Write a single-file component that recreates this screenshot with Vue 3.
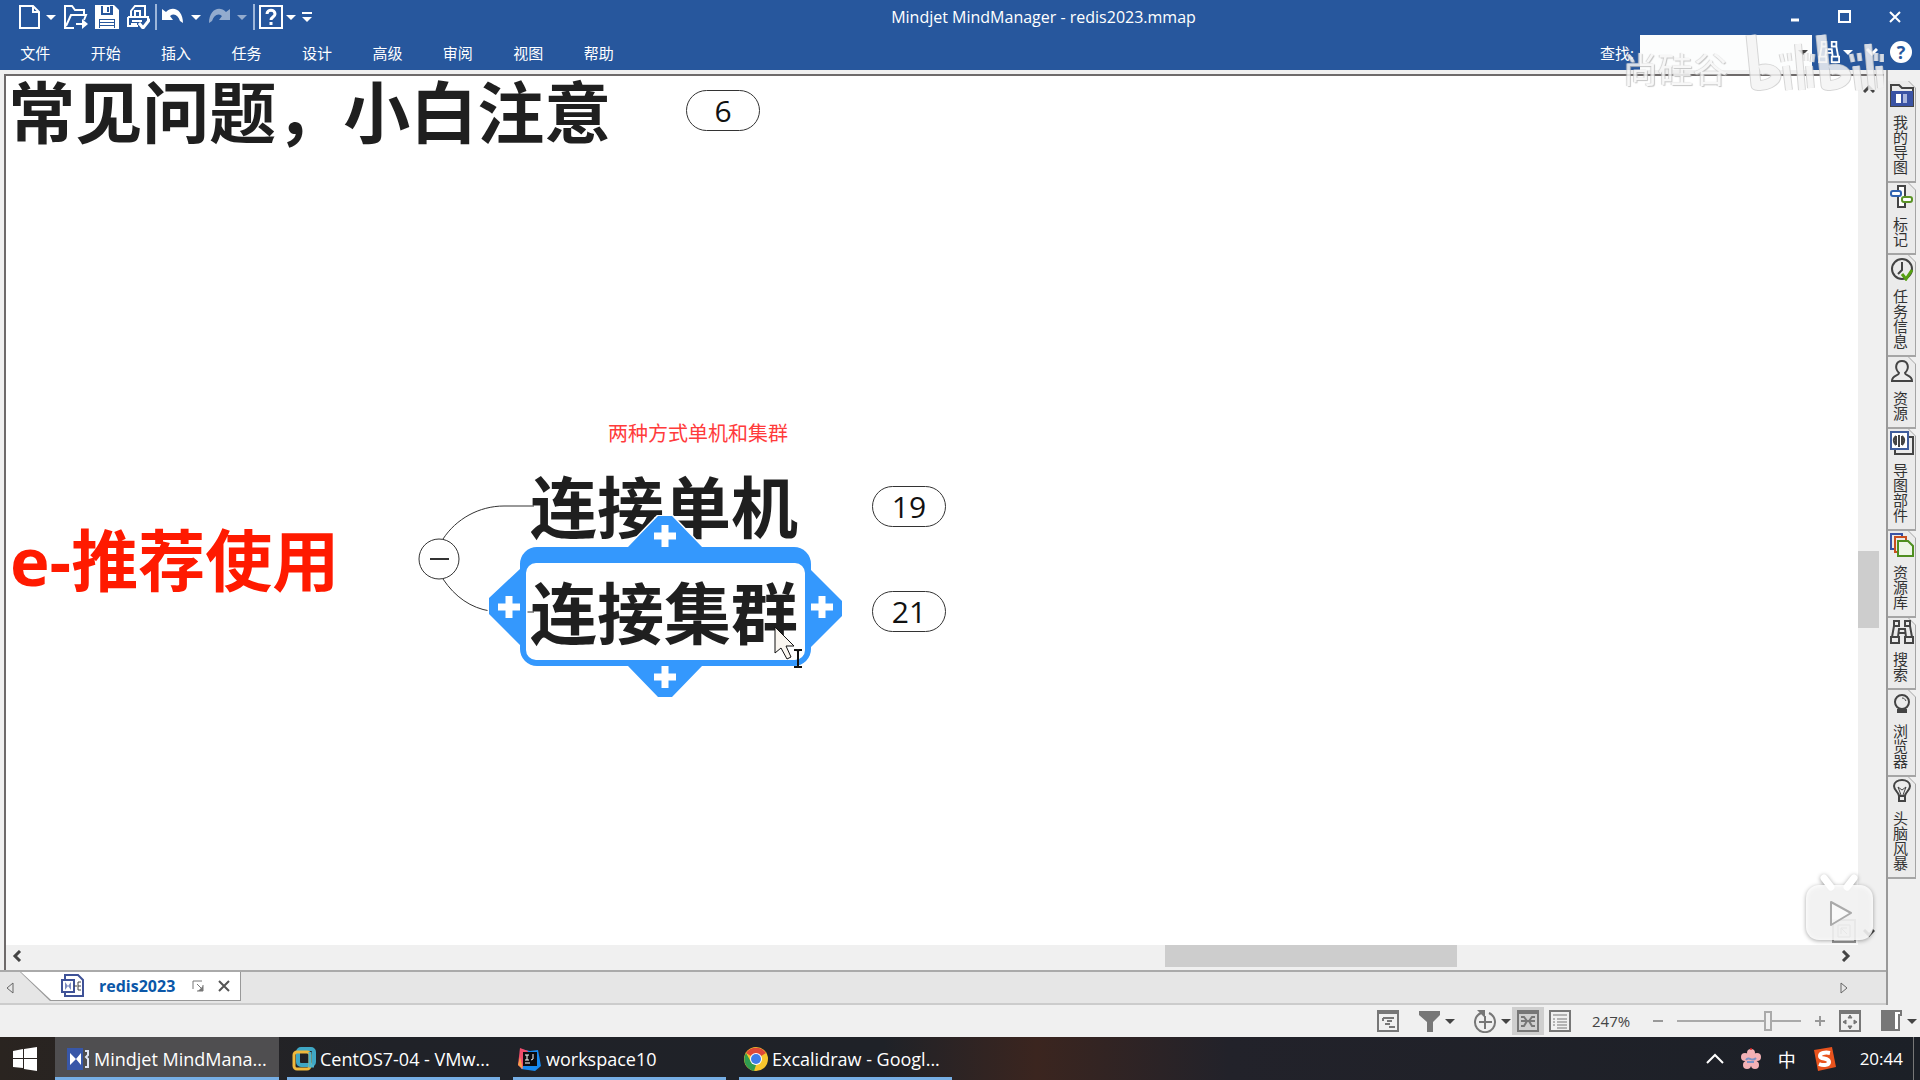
<template>
  <div class="window">
    <header class="header">
      <div class="title-row">
        <div class="quick">
          <button class="tool doc" aria-label="新建">
            <svg width="22" height="24" viewBox="0 0 22 24"><path d="M1 1h13l6 6v16H1zM14 1v6h6" fill="none" stroke="#fff" stroke-width="2" /></svg>
          </button>
          <button class="tool caret" aria-label="新建选项"><span class="arrow"></span></button>
          <button class="tool file" aria-label="打开">
            <svg width="24" height="24" viewBox="0 0 24 24" fill="none" stroke="#fff" stroke-width="2"><path d="M10 23H1V1h7l3 4h9v5M2 21l5-11h15l-2 5M12 19h8" /><path d="M18 14l6 5-6 5z" fill="#fff" stroke="none" /></svg>
          </button>
          <button class="tool file" aria-label="保存">
            <svg width="24" height="24" viewBox="0 0 24 24"><path d="M0 0h19l5 5v19H0z" fill="#fff" /><path d="M6 1h12v9H6zM4 14h16v9H4z" fill="#27579d" /><path d="M8 1h7v7H8z" fill="#fff" /><path d="M12 2h2v5h-2z" fill="#27579d" /><path d="M5 16h14M5 19h14M5 22h14" stroke="#fff" stroke-width="2" /></svg>
          </button>
          <button class="tool file" aria-label="打印">
            <svg width="24" height="24" viewBox="0 0 24 24" fill="none" stroke="#fff" stroke-width="2"><path d="M5 12V6l4-5h10v11M9 11V6h5v5M2 12h20v4M2 12v9h10M6 16h10M5 19h6" /><path d="M13 18l4 5 7-9" stroke-width="3" /></svg>
          </button>
          <span class="divider"></span>
          <button class="tool undo" aria-label="撤消">
            <svg width="22" height="20" viewBox="0 0 22 20"><path d="M0 2v11h11L8 9c4-3 8-1 10 5l3 2C21 3 11-2 4 5z" fill="#fff" /></svg>
          </button>
          <button class="tool caret" aria-label="撤消选项"><span class="arrow"></span></button>
          <button class="tool undo faded" aria-label="恢复">
            <svg width="22" height="20" viewBox="0 0 22 20"><path d="M22 2v11H11l3-4c-4-3-8-1-10 5l-3 2C1 3 11-2 18 5z" fill="#fff" /></svg>
          </button>
          <button class="tool caret faded" aria-label="恢复选项"><span class="arrow"></span></button>
          <span class="divider"></span>
          <button class="tool help" aria-label="帮助主题">
            <svg width="24" height="24" viewBox="0 0 24 24" fill="none" stroke="#fff"><path d="M1 1h22v22H1z" stroke-width="2" /><path d="M8 9c0-5 8-5 8 0 0 3-4 3-4 6" stroke-width="3" /><path d="M12 17v3" stroke-width="3" /></svg>
          </button>
          <button class="tool slim" aria-label="帮助选项"><span class="arrow"></span></button>
          <button class="tool more" aria-label="自定义快速访问工具栏"><span class="bar"></span><span class="arrow"></span></button>
        </div>
        <h1 class="title">Mindjet MindManager - redis2023.mmap</h1>
        <div class="controls">
          <button aria-label="最小化"><svg width="12" height="12"><path d="M2 9h8" stroke="#fff" stroke-width="3" /></svg></button>
          <button aria-label="最大化"><svg width="14" height="14"><path d="M1 1h11v11H1zM1 2h11" fill="none" stroke="#fff" stroke-width="2" /></svg></button>
          <button aria-label="关闭"><svg width="12" height="12"><path d="M1 1l10 10M11 1L1 11" stroke="#fff" stroke-width="2" /></svg></button>
        </div>
      </div>
      <div class="menu-row">
        <nav class="menu">
          <button v-for="item in menu" :key="item">{{ item }}</button>
        </nav>
        <div class="search">
          <label for="find">查找:</label>
          <div class="search-box">
            <input id="find" v-model="query" type="text" />
            <span class="arrow dark"></span>
          </div>
          <button class="tool binocular" aria-label="查找">
            <svg width="22" height="22" viewBox="0 0 24 24" fill="none" stroke="#fff" stroke-width="2" v-html="binoculars"></svg>
          </button>
          <button class="tool slim" aria-label="查找选项"><span class="arrow"></span></button>
          <button class="tool fold" aria-label="折叠功能区"><svg width="12" height="8"><path d="M1 1l5 5 5-5" fill="none" stroke="#fff" stroke-width="3" /></svg></button>
          <button class="round" aria-label="帮助">?</button>
        </div>
      </div>
    </header>

    <div class="body">
      <div class="left">
        <div class="pane">
          <div class="view">
            <main class="canvas">
              <div class="topic faq">s常见问题，小白注意</div>
              <button class="count count-faq">6</button>
              <div class="topic lettuce">e-推荐使用</div>
              <div class="note">两种方式单机和集群</div>
              <svg class="links" width="140" height="120" viewBox="0 0 140 120" fill="none" stroke="#333">
                <path d="M29 40C42 20 65 7 90 7h30M29 80c12 18 28 29 47 32M112 113h8" />
                <circle cx="25" cy="60" r="20" fill="#fff" />
                <path d="M16 60h19" stroke-width="2" />
              </svg>
              <div class="topic single">连接单机</div>
              <button class="count count-single">19</button>
              <svg class="selection" width="360" height="188" viewBox="0 0 360 188">
                <path fill="#3498fd" stroke="#fff" stroke-width="3" paint-order="stroke" fill-rule="evenodd" d="M51 32H142L172 1h14l30 31h92a17 17 0 0 1 17 17v6l31 31v15l-31 31v2a17 17 0 0 1-17 17H216l-30 31h-14l-30-31H51a17 17 0 0 1-17-17v-4L3 99V83l31-29v-5a17 17 0 0 1 17-17zM50 48a10 10 0 0 0-10 10v77a10 10 0 0 0 10 10h259a10 10 0 0 0 10-10V58a10 10 0 0 0-10-10z" />
                <path d="M168 21h22M179 10v22M168 162h22M179 151v22M12 92h22M23 81v22M325 92h22M336 81v22" stroke="#fff" stroke-width="7" />
              </svg>
              <div class="topic cluster">连接集群</div>
              <button class="count count-cluster">21</button>
              <svg class="pointer" width="32" height="44" viewBox="0 0 32 44">
                <path d="M1 1v26l6-5 6 11 4-2-5-11h8z" fill="#faf6f0" stroke="#111" stroke-width="1" />
                <path d="M20 24h3l1 1 1-1h3M24 25v15M20 41h3l1-1 1 1h3" fill="none" stroke="#111" stroke-width="2" />
              </svg>
              <button class="overview" aria-label="概览"><svg width="24" height="24"><path d="M1 1h22v22H1z" fill="#eee" stroke="#999" stroke-width="2" /><path d="M6 6h12v12H6zM9 15V9h6M9 9l6 6" fill="none" stroke="#888" /></svg></button>
            </main>
            <div class="vscroll">
              <button aria-label="向上滚动"><svg width="12" height="8"><path d="M1 7l5-5 5 5" fill="none" stroke="#444" stroke-width="3" /></svg></button>
              <div class="vtrack"><span class="vthumb"></span></div>
              <button aria-label="向下滚动"><svg width="12" height="8"><path d="M1 1l5 5 5-5" fill="none" stroke="#444" stroke-width="3" /></svg></button>
            </div>
          </div>
          <div class="hscroll">
            <button aria-label="向左滚动"><svg width="10" height="12"><path d="M8 1L3 6l5 5" fill="none" stroke="#444" stroke-width="3" /></svg></button>
            <div class="htrack"><span class="hthumb"></span></div>
            <button aria-label="向右滚动"><svg width="10" height="12"><path d="M2 1l5 5-5 5" fill="none" stroke="#444" stroke-width="3" /></svg></button>
          </div>
        </div>
        <div class="tabs">
          <button class="step" aria-label="上一个标签"><svg width="8" height="12"><path d="M7 1v10L1 6z" fill="none" stroke="#666" /></svg></button>
          <div class="tab">
            <svg width="24" height="24" viewBox="0 0 24 24" fill="none" stroke="#3f5297" stroke-width="2"><path d="M4 6V1h13l5 5v16H4v-4" /><path d="M1 6h12v12H1z" fill="#fff" /><path d="M4 8v8l3-4 3 4V8l-3 4z" fill="#7c8bc0" stroke="none" /><path d="M13 12h3M20 8h-3v8h3M17 12h3" stroke="#444" stroke-width="1" /></svg>
            <strong>redis2023</strong>
            <button aria-label="还原"><svg width="12" height="12"><path d="M1 9V1h9M5 4l5 5M11 5v6H5" fill="none" stroke="#777" stroke-width="1" /><path d="M11 6v5H6z" fill="#777" /></svg></button>
            <button aria-label="关闭标签"><svg width="12" height="12"><path d="M1 1l10 10M11 1L1 11" stroke="#555" stroke-width="2" /></svg></button>
          </div>
          <button class="step last" aria-label="下一个标签"><svg width="8" height="12"><path d="M1 1v10l6-5z" fill="none" stroke="#666" /></svg></button>
        </div>
      </div>
      <aside class="side">
        <button v-for="panel in panels" :key="panel.name" class="side-tab">
          <svg width="24" height="24" viewBox="0 0 24 24" fill="none" stroke="#444" stroke-width="2" v-html="panel.icon"></svg>
          <span>{{ panel.name }}</span>
        </button>
      </aside>
    </div>

    <footer class="status">
      <button class="s-btn wide" aria-label="备注"><svg width="22" height="22"><path d="M1 1h20v20H1zM1 3h20" fill="none" stroke="#777" stroke-width="2" /><path d="M6 8h11M6 8v3M10 11h5M8 14h5M12 17h6" fill="none" stroke="#777" stroke-width="2" /></svg></button>
      <button class="s-btn filter" aria-label="筛选"><svg width="22" height="22"><path d="M0 1h21v4l-7 7v10H8V12L0 5z" fill="#777" /></svg><span class="arrow dark"></span></button>
      <button class="s-btn zoom" aria-label="显示层级"><svg width="24" height="24" fill="none" stroke="#777" stroke-width="2"><path d="M8 4a10 10 0 1 0 8 0M12 7v13M6 13h13" /><path d="M4 1h8v8z" fill="#777" stroke="none" /></svg><span class="arrow dark"></span></button>
      <button class="s-btn active" aria-label="导图视图"><svg width="22" height="22" fill="none" stroke="#777" stroke-width="2"><path d="M1 1h20v20H1zM1 3h20M4 7h3l3 4-3 5H4M18 7h-3l-3 4 3 5h3M4 11h14" /></svg></button>
      <button class="s-btn outline" aria-label="大纲视图"><svg width="22" height="22" fill="none" stroke="#777"><path d="M1 1h20v20H1z" stroke-width="2" /><path d="M4 5h14M8 9h10M8 12h10M8 15h10M8 18h10M4 9h2M4 12h2M4 15h2" stroke-width="1" /></svg></button>
      <span class="percent">247%</span>
      <button class="sign" aria-label="缩小"><svg width="12" height="12"><path d="M1 6h10" stroke="#999" stroke-width="2" /></svg></button>
      <input v-model="zoom" class="slider" type="range" min="0" max="100" aria-label="缩放" />
      <button class="sign" aria-label="放大"><svg width="12" height="12"><path d="M1 6h10M6 1v10" stroke="#999" stroke-width="2" /></svg></button>
      <button class="s-btn fit" aria-label="适合窗口"><svg width="22" height="22" fill="none" stroke="#777" stroke-width="2"><path d="M1 1h20v20H1zM1 3h20" /><path d="M9 8l2-3 2 3zM9 16l2 3 2-3zM7 10l-3 2 3 2zM15 10l3 2-3 2z" fill="#777" stroke-width="1" /></svg></button>
      <button class="s-btn panel" aria-label="任务窗格"><svg width="22" height="22"><path d="M0 0h13v21H0z" fill="#777" /><path d="M13 1h7v4h-2v15h-5z" fill="#fff" stroke="#777" stroke-width="2" /></svg><span class="arrow dark"></span></button>
    </footer>

    <div class="taskbar">
      <button class="start" aria-label="开始菜单">
        <svg width="24" height="24" viewBox="0 0 24 24" fill="#fff"><path d="M0 4l10-2v9H0zM11 2l13-2v11H11zM0 12h10v9L0 20zM11 12h13v12l-13-2z" /></svg>
      </button>
      <button v-for="app in apps" :key="app.title" class="app" :class="{ current: app.current }">
        <svg width="24" height="24" viewBox="0 0 24 24" v-html="app.icon"></svg>
        <span>{{ app.title }}</span>
      </button>
      <div class="tray">
        <button aria-label="显示隐藏的图标"><svg width="18" height="12"><path d="M1 10l8-8 8 8" fill="none" stroke="#fff" stroke-width="2" /></svg></button>
        <svg width="22" height="22" viewBox="0 0 22 22"><g fill="#f3b1b5"><circle cx="11" cy="5" r="4" /><circle cx="17" cy="9" r="4" /><circle cx="15" cy="17" r="4" /><circle cx="7" cy="17" r="4" /><circle cx="5" cy="9" r="4" /><circle cx="11" cy="12" r="6" /></g><path d="M6 12c3-5 5 3 10-2M7 14h7" fill="none" stroke="#7b93c6" stroke-width="2" /><circle cx="11" cy="1" r="1" fill="#d22" /></svg>
        <button class="ime">中</button>
        <svg width="24" height="24" viewBox="0 0 24 24"><path d="M2 3L20 0l4 20-18 4z" fill="#e9531d" /><path d="M18 6c-5-1-10 0-10 3 0 4 9 1 9 6 0 3-5 4-10 2" fill="none" stroke="#fff" stroke-width="4" /></svg>
        <time class="clock">20:44</time>
        <span class="peek"></span>
      </div>
    </div>

    <div class="watermark">
      <span>尚硅谷</span>
      <svg width="140" height="64" viewBox="0 0 140 64" fill="none" stroke-linejoin="round">
        <g v-for="pass in markPasses" :key="pass.extra" :stroke="pass.color">
          <path d="M7 3l5 50c10 2 20-4 20-9s-8-9-16-6M77 3l5 50c10 2 20-4 20-9s-8-9-16-6" :stroke-width="9 + pass.extra" />
          <path d="M42 34l3 24M54 12l4 46M65 34l2 22M112 34l3 24M124 12l4 46M135 34l2 22" :stroke-width="6 + pass.extra" />
          <path d="M37 22l2 8M45 21l1 8M62 21v8M69 22l-1 8M107 22l2 8M115 21l1 8M132 21v8M138 22v8" :stroke-width="3 + pass.extra" />
        </g>
      </svg>
    </div>
    <svg class="player" width="76" height="74" viewBox="0 0 76 74">
      <path d="M22 6l7 9M52 6l-7 9" stroke="#fff" stroke-width="7" stroke-linecap="round" />
      <rect x="4" y="13" width="67" height="55" rx="13" fill="#fff" fill-opacity="0.85" />
      <path d="M29 30l20 11-20 12z" fill="#fff" fill-opacity="0.6" stroke="#aaa" stroke-width="2" stroke-linejoin="round" />
    </svg>
  </div>
</template>

<script setup>
import { ref } from 'vue'

const query = ref('')
const zoom = ref(75)

const menu = ['文件', '开始', '插入', '任务', '设计', '高级', '审阅', '视图', '帮助']

const binoculars =
  '<path d="M4 1h5v5H4zM15 1h5v5h-5zM4 6L2 17h6l1-8h6l1 8h6L20 6M1 17h8v6H1zM15 17h8v6h-8zM9 13h6"/>'

const panels = [
  {
    name: '我的导图',
    icon: '<path d="M1 8V2h8l3 3h11v18H1z"/><path d="M2 9h20v13H2z" fill="#3a53a4" stroke="#3a53a4"/><path d="M6 11h5v9H6z" fill="#fff" stroke="none"/><path d="M13 11h4v9h-4z" fill="#aab6dd" stroke="none"/>'
  },
  {
    name: '标记',
    icon: '<path d="M8 1h7v21H8z" fill="#fff"/><rect x="1" y="6" width="10" height="5" rx="2" fill="#fff" stroke="#2f62b0"/><rect x="12" y="12" width="10" height="5" rx="2" fill="#fff" stroke="#5b9427"/>'
  },
  {
    name: '任务信息',
    icon: '<circle cx="12" cy="12" r="10"/><path d="M12 5v8l-4 4"/><path d="M12 17l4 5 6-9" stroke="#56a012" stroke-width="3"/>'
  },
  {
    name: '资源',
    icon: '<path d="M9 14C4 9 6 2 12 2s8 7 3 12c0 3 7 2 7 8H2c0-6 7-5 7-8z"/>'
  },
  {
    name: '导图部件',
    icon: '<path d="M5 19v4h18V6h-4"/><path d="M1 1h17v17H1z" fill="#fff" stroke="#3f5d9c"/><path d="M9 4v12M6 5v9M12 5v9M6 5c-3 3-3 6 0 9M12 5c3 3 3 6 0 9"/>'
  },
  {
    name: '资源库',
    icon: '<path d="M6 16H1V1h11v3" stroke="#3a53a4"/><path d="M8 19H5V4h11v3" stroke="#c94f1f"/><path d="M8 8h10l5 5v10H8z" fill="#eef6e8" stroke="#4f8f20"/>'
  },
  { name: '搜索', icon: binoculars },
  {
    name: '浏览器',
    icon: '<circle cx="12" cy="10" r="7"/><path d="M12 6c2 0 3 1 4 3" stroke-width="1"/><path d="M8 18h8v2H8z" fill="#444"/>'
  },
  {
    name: '头脑风暴',
    icon: '<path d="M9 17c0-4-5-5-5-10 0-8 16-8 16 0 0 5-5 6-5 10zM9 17v5h6v-5"/><path d="M11 16L8 8l4 3 4-3-3 8" stroke-width="1"/>'
  }
]

const apps = [
  {
    title: 'Mindjet MindMana...',
    current: true,
    icon: '<path d="M1 1h16v22H1z" fill="#3857a8"/><path d="M4 6v12l6-6 5 6V6l-5 6z" fill="#fff"/><path d="M19 4h3v4l-2 2 2 2v8h-3" fill="none" stroke="#dfe5f5" stroke-width="2"/>'
  },
  {
    title: 'CentOS7-04 - VMw...',
    icon: '<rect x="6" y="2" width="16" height="16" rx="3" fill="none" stroke="#3fa7c4" stroke-width="4"/><rect x="2" y="5" width="16" height="17" rx="3" fill="none" stroke="#f0b93c" stroke-width="3"/><path d="M18 5v14h4" fill="none" stroke="#4fb4cb" stroke-width="3"/>'
  },
  {
    title: 'workspace10',
    icon: '<path d="M2 2l10 2 8-1 3 16-6 5-14-2z" fill="#1689f0"/><path d="M2 1l8 3L4 22l-4-4z" fill="#f14c6b"/><path d="M2 10l3 12-5-4z" fill="#f5a04b"/><path d="M5 5h14v14H5z" fill="#0c0c10"/><path d="M7 8h4M9 8v5M7 13h4M15 7v5l-2 1M7 16h5" stroke="#fff" fill="none"/>'
  },
  {
    title: 'Excalidraw - Googl...',
    icon: '<circle cx="12" cy="12" r="12" fill="#f7c52d"/><path d="M12 12L2 6a12 12 0 0 1 20 0z" fill="#df4937"/><path d="M2 6l5 9 5 3-2 6A12 12 0 0 1 2 6z" fill="#2f9c4f"/><circle cx="12" cy="12" r="6" fill="#fff"/><circle cx="12" cy="12" r="5" fill="#3f7de8"/>'
  }
]

const markPasses = [
  { extra: 2, color: '#cfcfcf' },
  { extra: 0, color: '#f4f4f4' }
]
</script>

<style>
body {
  margin: 0;
}
</style>

<style scoped>
.window {
  position: relative;
  display: flex;
  flex-direction: column;
  min-height: 100vh;
  overflow: hidden;
  background: #f0f0f0;
  font-family: "Open Sans", "Noto Sans CJK SC", sans-serif;
  font-size: 15px;
}

button {
  display: flex;
  align-items: center;
  justify-content: center;
  padding: 0;
  border: none;
  background: none;
  color: inherit;
  font: inherit;
}

svg {
  display: block;
  flex: none;
}

.arrow {
  width: 0;
  border: 5px solid transparent;
  border-top-color: #fff;
  border-bottom: none;
}

.arrow.dark {
  border-top-color: #444;
}

/* header */
.header {
  background: #27579d;
  color: #fff;
}

.title-row {
  display: flex;
  align-items: center;
  height: 34px;
}

.quick {
  display: flex;
  align-items: center;
  height: 32px;
  padding-left: 16px;
}

.doc {
  width: 28px;
}

.caret {
  width: 14px;
  margin-right: 2px;
}

.undo + .caret {
  margin-left: 2px;
}

.file {
  width: 31px;
}

.undo {
  width: 28px;
}

.faded {
  opacity: 0.5;
}

.divider {
  width: 2px;
  height: 26px;
  margin: 0 2px;
  background: #9db6da;
}

.help {
  width: 28px;
}

.slim {
  width: 12px;
}

.more {
  flex-direction: column;
  gap: 3px;
  width: 20px;
}

.bar {
  width: 10px;
  height: 2px;
  background: #fff;
}

.title {
  flex: 1;
  margin: 0;
  font-size: 16px;
  font-weight: 400;
  text-align: center;
}

.controls {
  display: flex;
}

.controls button {
  width: 50px;
  height: 34px;
}

.menu-row {
  display: flex;
  justify-content: space-between;
  height: 36px;
}

.menu {
  display: flex;
  width: 634px;
}

.menu button {
  flex: 1;
}

.search {
  display: flex;
  align-items: center;
  padding-right: 8px;
}

.search-box {
  display: flex;
  align-items: center;
  align-self: stretch;
  box-sizing: border-box;
  width: 172px;
  margin: 1px 4px 0 6px;
  padding-right: 4px;
  background: #fcfdfd;
}

.search-box input {
  flex: 1;
  min-width: 0;
  border: none;
  outline: none;
  background: none;
  font-size: 15px;
}

.binocular {
  width: 26px;
}

.fold {
  width: 36px;
}

.round {
  width: 22px;
  height: 22px;
  border-radius: 50%;
  background: #fff;
  color: #27579d;
  font-size: 18px;
  font-weight: 700;
}

/* body */
.body {
  display: flex;
  flex: 1;
}

.left {
  display: flex;
  flex: 1;
  flex-direction: column;
  min-width: 0;
}

.pane {
  display: flex;
  flex: 1;
  flex-direction: column;
  margin: 4px 2px 0 4px;
  border-top: 2px solid #6e6a6a;
  border-left: 2px solid #6e6a6a;
  background: #fff;
}

.view {
  display: flex;
  flex: 1;
}

.canvas {
  position: relative;
  flex: 1;
  overflow: hidden;
  background: #fff;
}

.topic {
  position: absolute;
  color: #1f1f1f;
  font-size: 67px;
  font-weight: 700;
  line-height: 80px;
  white-space: nowrap;
}

.faq {
  top: -4px;
  left: -31px;
}

.lettuce {
  top: 444px;
  left: 4px;
  color: #ff1a00;
}

.single {
  top: 391px;
  left: 524px;
}

.cluster {
  top: 497px;
  left: 524px;
}

.note {
  position: absolute;
  top: 346px;
  left: 602px;
  color: #ff3b3b;
  font-size: 20px;
  line-height: 24px;
}

.count {
  position: absolute;
  width: 74px;
  height: 41px;
  border: 1px solid #333;
  border-radius: 21px;
  background: #fff;
  color: #111;
  font-size: 30px;
  line-height: 38px;
}

.count-faq {
  top: 14px;
  left: 680px;
}

.count-single {
  top: 410px;
  left: 866px;
}

.count-cluster {
  top: 515px;
  left: 866px;
}

.links {
  position: absolute;
  top: 423px;
  left: 408px;
}

.selection {
  position: absolute;
  top: 439px;
  left: 480px;
}

.pointer {
  position: absolute;
  top: 550px;
  left: 768px;
}

.overview {
  position: absolute;
  right: 2px;
  bottom: 2px;
}

.vscroll {
  display: flex;
  flex-direction: column;
  width: 26px;
  background: #f0f0f0;
}

.vscroll button {
  width: 22px;
  height: 25px;
}

.vtrack {
  display: flex;
  flex: 1;
  flex-direction: column;
}

.vtrack::before {
  content: "";
  flex: 450;
}

.vtrack::after {
  content: "";
  flex: 292;
}

.vthumb {
  flex: 77;
  width: 21px;
  background: #cdcdcd;
}

.hscroll {
  display: flex;
  height: 25px;
  padding-right: 27px;
  background: #f0f0f0;
}

.hscroll button {
  width: 22px;
  height: 22px;
}

.htrack {
  display: flex;
  flex: 1;
}

.htrack::before {
  content: "";
  flex: 1137;
}

.htrack::after {
  content: "";
  flex: 378;
}

.hthumb {
  flex: 292;
  height: 22px;
  background: #cdcdcd;
}

/* document tabs */
.tabs {
  display: flex;
  height: 31px;
  border-top: 2px solid #aaa;
  border-bottom: 2px solid #ccc;
  background: #e6e6e6;
}

.step {
  width: 20px;
}

.step.last {
  width: 40px;
  margin-left: auto;
  margin-right: 22px;
}

.tab {
  position: relative;
  display: flex;
  isolation: isolate;
  align-items: center;
  gap: 14px;
  height: 29px;
  padding: 0 11px 2px 41px;
  box-sizing: border-box;
  background: #999;
  clip-path: polygon(0 0, 100% 0, 100% 100%, 30px 100%);
}

.tab::before {
  content: "";
  position: absolute;
  z-index: -1;
  inset: 0 1px 1px 1px;
  background: #fff;
  clip-path: polygon(0 0, 100% 0, 100% 100%, 30px 100%);
}

.tab strong {
  margin-right: 3px;
  color: #0b57a8;
  font-size: 16px;
}

/* side panels */
.side {
  box-sizing: border-box;
  width: 34px;
  padding: 11px 4px 0 0;
  border-left: 2px solid #999;
  background: #f0f0f0;
}

.side-tab {
  position: relative;
  isolation: isolate;
  flex-direction: column;
  justify-content: flex-start;
  gap: 8px;
  box-sizing: border-box;
  width: 100%;
  padding: 2px 0 8px;
  background: #a5a5a5;
  color: #333;
  line-height: 20px;
  clip-path: polygon(0 0, calc(100% - 7px) 0, 100% 7px, 100% 100%, 0 100%);
}

.side-tab::before {
  content: "";
  position: absolute;
  z-index: -1;
  inset: 0 1px 2px 0;
  background: #ebebeb;
  clip-path: polygon(0 0, calc(100% - 7px) 0, 100% 7px, 100% 100%, 0 100%);
}

.side-tab span {
  padding-right: 4px;
  writing-mode: vertical-rl;
}

/* status bar */
.status {
  display: flex;
  align-items: center;
  justify-content: flex-end;
  box-sizing: border-box;
  height: 32px;
  padding-right: 3px;
  color: #444;
}

.s-btn {
  gap: 4px;
  height: 28px;
}

.wide {
  justify-content: flex-start;
  width: 42px;
}

.filter {
  justify-content: flex-start;
  width: 53px;
}

.zoom {
  width: 40px;
}

.active {
  width: 32px;
  background: #cfcfcf;
}

.outline {
  width: 32px;
}

.percent {
  width: 54px;
  padding-left: 16px;
}

.sign {
  width: 24px;
}

.slider {
  width: 124px;
  height: 22px;
  margin: 0 7px;
  appearance: none;
  background: linear-gradient(#aaa, #aaa) center / 100% 2px no-repeat;
}

.slider::-webkit-slider-thumb {
  appearance: none;
  box-sizing: border-box;
  width: 8px;
  height: 20px;
  border: 2px solid #aaa;
  background: #f0f0f0;
}

.fit {
  width: 36px;
}

.panel {
  width: 36px;
  margin-left: 13px;
}

/* taskbar */
.taskbar {
  display: flex;
  height: 43px;
  background: linear-gradient(90deg, #2a2420, #202228 20%, #1f2228 46%, #3b251f 54%, #22222a 64%, #1c2027);
  color: #fff;
  font-size: 18px;
}

.start {
  width: 55px;
  padding-right: 6px;
}

.app {
  justify-content: flex-start;
  gap: 4px;
  box-sizing: border-box;
  width: 213px;
  margin-right: 13px;
  padding-top: 3px;
  padding-left: 5px;
  border-bottom: 3px solid #76aee4;
  white-space: nowrap;
}

.app.current {
  width: 224px;
  margin-right: 8px;
  padding-left: 11px;
  background: #4f4e50;
}

.tray {
  display: flex;
  align-items: center;
  gap: 16px;
  margin-left: auto;
}

.clock {
  margin-left: 8px;
  font-size: 17px;
}

.peek {
  width: 1px;
  height: 43px;
  margin-left: -6px;
  margin-right: 6px;
  background: #777;
}

/* overlays */
.watermark {
  position: absolute;
  top: 32px;
  right: 36px;
  display: flex;
  align-items: center;
  gap: 16px;
  pointer-events: none;
  opacity: 0.85;
}

.watermark span {
  padding-top: 12px;
  color: #f7f7f7;
  font-size: 35px;
  line-height: 40px;
  text-shadow: 1px 1px 1px #bbb, -1px 0 1px #ccc;
}

.player {
  position: absolute;
  right: 42px;
  bottom: 134px;
  pointer-events: none;
  filter: drop-shadow(0 1px 2px rgba(0, 0, 0, 0.4));
}
</style>
